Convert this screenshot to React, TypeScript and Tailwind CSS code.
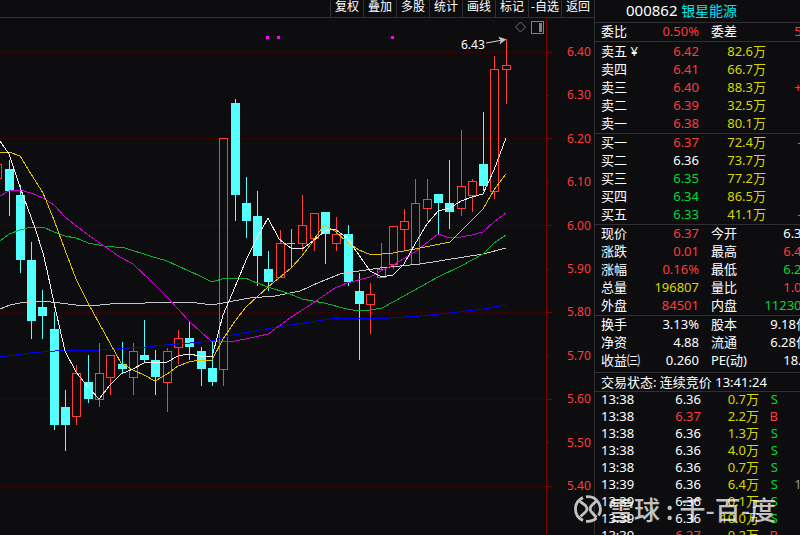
import React from 'react'

type Kind = 'up' | 'down' | 'flat'
type Candle = [Kind, number, number, number, number]

const RED = '#ff3b3b'
const CYAN = '#54ffff'

const tools = ['复权', '叠加', '多股', '统计', '画线', '标记', '-自选', '返回']

const axis = ['6.40', '6.30', '6.20', '6.10', '6.00', '5.90', '5.80', '5.70', '5.60', '5.50', '5.40']

// kind, wick top, body top, body bottom, wick bottom
const candles: Candle[] = [
  ['down', 160, 169, 191, 216],
  ['down', 185, 195, 260, 273],
  ['down', 242, 260, 321, 339],
  ['down', 290, 307, 316, 339],
  ['down', 312, 329, 425, 430],
  ['down', 390, 407, 425, 451],
  ['up', 365, 373, 417, 425],
  ['down', 355, 382, 399, 403],
  ['up', 343, 373, 400, 407],
  ['up', 355, 355, 378, 395],
  ['down', 342, 364, 369, 373],
  ['up', 343, 351, 378, 395],
  ['down', 320, 355, 360, 363],
  ['down', 350, 360, 377, 395],
  ['up', 348, 351, 383, 412],
  ['up', 330, 338, 348, 364],
  ['down', 321, 338, 347, 360],
  ['down', 347, 351, 369, 386],
  ['down', 342, 368, 382, 386],
  ['up', 138, 138, 370, 386],
  ['down', 99, 103, 195, 221],
  ['down', 177, 203, 221, 238],
  ['down', 191, 216, 256, 286],
  ['down', 251, 269, 282, 291],
  ['up', 230, 243, 278, 278],
  ['flat', 229, 243, 243, 268],
  ['up', 195, 225, 244, 251],
  ['up', 213, 213, 239, 251],
  ['down', 212, 212, 234, 264],
  ['up', 217, 234, 244, 251],
  ['down', 225, 234, 282, 286],
  ['down', 273, 291, 304, 360],
  ['up', 283, 294, 305, 334],
  ['up', 243, 269, 278, 278],
  ['up', 226, 226, 265, 269],
  ['up', 209, 221, 230, 251],
  ['up', 179, 203, 265, 265],
  ['up', 179, 199, 209, 221],
  ['down', 194, 194, 203, 234],
  ['down', 160, 203, 212, 229],
  ['up', 130, 186, 209, 216],
  ['up', 179, 181, 196, 212],
  ['down', 112, 164, 186, 191],
  ['up', 56, 69, 192, 199],
  ['up', 39, 65, 70, 104],
]

const averages = [
  {
    color: '#0000f0',
    points: '0,357 30,353 55,351 100,350 145,347 165,345 190,343 212,341 228,336 260,330 290,325 330,319 390,318 420,316 450,313 483,309 506,305',
  },
  {
    color: '#c8c8c8',
    points: '0,309 10,305 20,303 42,301 60,303 76,305 100,305 120,303 145,303 160,302 190,302 212,305 228,302 250,298 275,296 300,291 320,282 340,274 359,271 380,268 420,264 483,254 506,248',
  },
  {
    color: '#10b030',
    points: '0,241 9,234 20,230 31,227 43,227 54,232 65,236 76,238 88,243 104,246 125,248 150,256 167,261 189,271 200,276 212,282 225,278 245,278 257,283 268,287 290,294 302,299 324,303 347,309 359,311 370,310 382,308 393,302 404,296 438,277 461,266 483,254 494,243 506,235',
  },
  {
    color: '#d000d8',
    points: '0,196 9,191 20,190 31,193 43,198 54,205 65,217 88,235 104,246 120,257 133,264 150,280 167,297 189,321 200,331 212,342 235,341 246,339 268,334 290,318 313,303 335,288 347,283 370,277 385,269 393,265 415,252 438,234 450,238 461,237 472,235 483,232 494,222 506,213',
  },
  {
    color: '#e0c400',
    points: '0,152 9,152 20,156 31,174 43,193 54,220 65,250 76,279 88,303 110,343 121,363 133,370 144,375 155,381 167,374 178,366 189,362 200,360 212,360 223,339 235,321 246,307 268,287 279,278 291,268 302,256 313,241 324,225 335,231 347,242 359,250 371,255 382,254 393,253 420,248 450,242 483,209 494,190 506,174',
  },
  {
    color: '#f0f0f0',
    points: '0,141 9,154 20,187 35,228 43,253 47,270 54,303 65,351 76,372 88,387 99,399 110,385 121,374 133,369 144,363 155,362 167,362 178,356 189,354 200,356 212,357 223,315 235,287 247,258 257,238 268,218 279,239 291,248 302,249 313,241 325,231 335,229 347,238 359,255 370,271 382,277 393,275 404,264 415,244 427,224 438,211 450,208 461,201 472,197 483,194 494,170 506,138',
  },
]

const W = 'text-white'
const R = 'text-[#ff3b3b]'
const G = 'text-[#00d838]'
const Y = 'text-[#d8d800]'

const asks = [
  ['卖五 ¥', '6.42', R, '82.6万', ''],
  ['卖四', '6.41', R, '66.7万', ''],
  ['卖三', '6.40', R, '88.3万', '+1'],
  ['卖二', '6.39', R, '32.5万', ''],
  ['卖一', '6.38', R, '80.1万', ''],
]

const bids = [
  ['买一', '6.37', R, '72.4万', '-1'],
  ['买二', '6.36', W, '73.7万', ''],
  ['买三', '6.35', G, '77.2万', ''],
  ['买四', '6.34', G, '86.5万', ''],
  ['买五', '6.33', G, '41.1万', '-2'],
]

const ratio = [['委比', '0.50%', R, '委差', '52', R]]

const quote = [
  ['现价', '6.37', R, '今开', '6.36', W],
  ['涨跌', '0.01', R, '最高', '6.43', R],
  ['涨幅', '0.16%', R, '最低', '6.28', G],
  ['总量', '196807', Y, '量比', '1.05', R],
  ['外盘', '84501', R, '内盘', '112306', G],
]

const basics = [
  ['换手', '3.13%', W, '股本', '9.18亿', W],
  ['净资', '4.88', W, '流通', '6.28亿', W],
  ['收益㈢', '0.260', W, 'PE(动)', '18.4', W],
]

const trades = [
  ['13:38', '6.36', '0.7万', 'S', ''],
  ['13:38', '6.37', '2.2万', 'B', ''],
  ['13:38', '6.36', '1.3万', 'S', ''],
  ['13:38', '6.36', '4.0万', 'S', ''],
  ['13:38', '6.36', '0.7万', 'S', ''],
  ['13:39', '6.36', '6.4万', 'S', '12'],
  ['13:39', '6.36', '0.1万', 'S', ''],
  ['13:39', '6.36', '10.0万', 'S', ''],
  ['13:39', '6.37', '0.2万', 'B', ''],
]

const CandleShape: React.FC<{ candle: Candle; index: number }> = ({ candle, index }) => {
  const [kind, high, top, bottom, low] = candle
  const x = Math.round(8.5 + index * 11.3)

  if (kind === 'flat') {
    return (
      <g fill="#b8b8b8">
        <rect x={x} y={high} width="1" height={low - high} />
        <rect x={x - 4} y={top} width="8" height="1" />
      </g>
    )
  }
  if (kind === 'down') {
    return (
      <g fill={CYAN}>
        <rect x={x} y={high} width="1" height={low - high} />
        <rect x={x - 4} y={top} width="9" height={bottom - top} />
      </g>
    )
  }
  return (
    <g fill={RED}>
      <rect x={x} y={high} width="1" height={top - high} />
      <rect x={x} y={bottom} width="1" height={low - bottom} />
      <rect x={x - 3.5} y={top + 0.5} width="8" height={bottom - top - 1} fill="none" stroke={RED} />
    </g>
  )
}

const Chart: React.FC = () => (
  <svg viewBox="0 18 594 517" className="block w-full h-auto" role="img" aria-label="K线图">
    <g shapeRendering="crispEdges">
      {axis.map((label, i) => {
        const y = Math.round(51.5 + i * 43.4) + 0.5
        return i % 2 === 0 ? (
          <g key={label} stroke="#780000">
            <line x1="0" x2="546" y1={y} y2={y} stroke="#640000" strokeDasharray="1 3" />
            <line x1="547" x2="552" y1={y} y2={y} />
          </g>
        ) : (
          <line key={label} x1="547" x2="549" y1={y} y2={y} stroke="#780000" />
        )
      })}
      <line x1="546.5" x2="546.5" y1="18" y2="535" stroke="#780000" />
      <rect x="-6.5" y="164.5" width="8" height="14" fill="none" stroke={RED} />
      {candles.map((candle, i) => (
        <CandleShape key={i} candle={candle} index={i} />
      ))}
      {averages.map((line) => (
        <polyline key={line.color} points={line.points} fill="none" stroke={line.color} />
      ))}
      <g fill="#ff00ff">
        <rect x="266" y="36" width="3" height="3" />
        <rect x="277" y="36" width="3" height="3" />
        <rect x="391" y="36" width="3" height="3" />
      </g>
      <rect x="531.5" y="21.5" width="12" height="12" fill="none" stroke="#808080" />
      <rect x="539" y="23" width="3" height="9" fill="#808080" />
    </g>
    <path d="M520.5 22 L525.5 27 L520.5 32 L515.5 27 Z" fill="none" stroke="#707070" />
    <path d="M486 43 L503 40" stroke="#d8d8d8" fill="none" />
    <path d="M499 37.5 L505.5 39.5 L500 43.5 L501.5 40.5 Z" stroke="#c8c8c8" fill="#c8c8c8" />
    <text x="461" y="49" fontSize="12" fill="#ffffff">6.43</text>
    <g fontSize="12" fill={RED}>
      {axis.map((label, i) => (
        <text key={label} x="567" y={Math.round(56 + i * 43.4)}>{label}</text>
      ))}
    </g>
  </svg>
)

const BookTable: React.FC<{ rows: string[][]; label: string; extra: string }> = ({ rows, label, extra }) => (
  <table className="table-fixed w-[208px] leading-4" aria-label={label}>
    <colgroup>
      <col className="w-[50px]" />
      <col className="w-[48px]" />
      <col className="w-[67px]" />
      <col className="w-[43px]" />
    </colgroup>
    <tbody>
      {rows.map(([name, price, color, volume, change]) => (
        <tr key={name} className="h-[18px]">
          <th className="p-0 pb-0.5 text-left font-normal">{name}</th>
          <td className={`p-0 pb-0.5 text-right ${color}`}>{price}</td>
          <td className={`p-0 pb-0.5 text-right ${Y}`}>{volume}</td>
          <td className={`p-0 pb-0.5 text-right ${extra}`}>{change}</td>
        </tr>
      ))}
    </tbody>
  </table>
)

const PairTable: React.FC<{ rows: string[][]; label: string }> = ({ rows, label }) => (
  <table className="table-fixed w-[208px] leading-4" aria-label={label}>
    <colgroup>
      <col className="w-[50px]" />
      <col className="w-[48px]" />
      <col className="w-[57px]" />
      <col className="w-[53px]" />
    </colgroup>
    <tbody>
      {rows.map(([name, value, color, name2, value2, color2]) => (
        <tr key={name} className="h-[18px]">
          <th className="p-0 pb-0.5 text-left font-normal">{name}</th>
          <td className={`p-0 pb-0.5 text-right ${color}`}>{value}</td>
          <th className="p-0 pb-0.5 pl-3 text-left font-normal">{name2}</th>
          <td className={`p-0 pb-0.5 text-right ${color2}`}>{value2}</td>
        </tr>
      ))}
    </tbody>
  </table>
)

const App: React.FC = () => {
  return (
    <div className="relative flex h-screen overflow-hidden bg-[#0d0d0f] text-white font-['Noto_Sans','Noto_Sans_CJK_SC',sans-serif]">
      <main className="flex-1 min-w-0">
        <div className="flex h-[18px] justify-end border-b border-[#303034] text-[12px] leading-[14px]">
          {tools.map((tool) => (
            <button key={tool} className="flex w-[33px] items-start justify-center border-l border-[#303034] whitespace-nowrap">{tool}</button>
          ))}
        </div>
        <Chart />
      </main>

      <aside className="w-[206px] shrink-0 overflow-hidden border-l border-[#303034] text-[13px] leading-[18px] whitespace-nowrap">
        <h1 className="h-[23px] border-b border-[#303034] pl-[31px] text-[14px] leading-5">
          <span className="text-[15px]">000862</span> <span className="text-[#00e4f0]">银星能源</span>
        </h1>
        <section className="border-b border-[#303034] pl-1.5">
          <PairTable rows={ratio} label="委比" />
        </section>
        <section className="border-b border-[#303034] pt-px pl-1.5">
          <BookTable rows={asks} label="卖盘" extra={R} />
        </section>
        <section className="border-b border-[#303034] pl-1.5">
          <BookTable rows={bids} label="买盘" extra={G} />
        </section>
        <section className="border-b border-[#303034] pl-1.5">
          <PairTable rows={quote} label="行情" />
        </section>
        <section className="border-b border-[#303034] pb-0.5 pl-1.5">
          <PairTable rows={basics} label="基本面" />
        </section>
        <p className="border-b border-[#303034] pl-1.5">交易状态: 连续竞价 13:41:24</p>
        <section className="pl-1.5">
          <table className="table-fixed w-[208px] leading-[15px]" aria-label="成交明细">
            <colgroup>
              <col className="w-[50px]" />
              <col className="w-[50px]" />
              <col className="w-[58px]" />
              <col className="w-[19px]" />
              <col className="w-[31px]" />
            </colgroup>
            <tbody>
              {trades.map(([time, price, volume, side, count], i) => (
                <tr key={i} className="h-[17px]">
                  <td className="p-0 pb-0.5">{time}</td>
                  <td className={`p-0 pb-0.5 text-right ${side === 'B' ? R : W}`}>{price}</td>
                  <td className={`p-0 pb-0.5 text-right ${Y}`}>{volume}</td>
                  <td className={`p-0 pb-0.5 text-right ${side === 'B' ? R : G}`}>{side}</td>
                  <td className="p-0 pb-0.5 text-right text-[#9098a8]">{count}</td>
                </tr>
              ))}
            </tbody>
          </table>
        </section>
      </aside>

      {/* watermark */}
      <div className="absolute right-6 bottom-2.5 flex items-center gap-1.5 opacity-75">
        <svg viewBox="0 0 28 28" className="w-7 h-7" fill="none" stroke="#ffffff" strokeWidth="2.8">
          <path d="M9 2.6 A12.4 12.4 0 0 0 9 25.4" />
          <path d="M12 1.8 A12.4 12.4 0 0 1 24.5 20.5" />
          <path d="M12 26.2 A12.4 12.4 0 0 0 22.5 23" />
          <path d="M6 6.5 L11 10 Q15 14 11 17.5 L6.5 21.5" />
          <path d="M22.5 6 L18 10 Q14.5 14 17.5 17 L22.5 22.5" />
        </svg>
        <span className="text-[26px] leading-8 whitespace-nowrap font-medium font-['Noto_Sans_CJK_SC',sans-serif]">雪球 : 千-百-度</span>
      </div>
    </div>
  )
}

export default App
